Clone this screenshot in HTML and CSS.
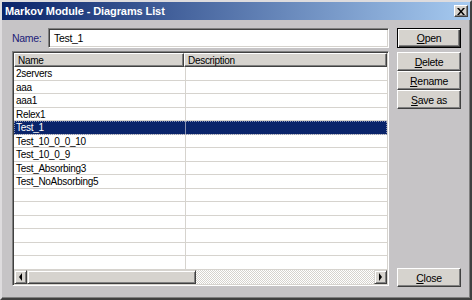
FILE: index.html
```html
<!DOCTYPE html>
<html lang="en">
<head>
  <meta charset="UTF-8">
  <title>Markov Module - Diagrams List</title>
  <link rel="stylesheet" href="styles.css">
</head>
<body>
  <div class="window">
    <div class="titlebar">
      <span class="title">Markov Module - Diagrams List</span>
      <span class="close-x">
        <svg width="8" height="7" viewBox="0 0 8 7"><path d="M0 0h2l2 2.5L6 0h2L5 3.5 8 7H6L4 4.5 2 7H0l3-3.5z" fill="#000"/></svg>
      </span>
    </div>

    <div class="client">
      <div class="left">
        <div class="name-row">
          <label class="name-label">Name:</label>
          <div class="textbox">Test_1</div>
        </div>

        <div class="listbox">
          <div class="header">
            <div class="hcell col-name">Name</div>
            <div class="hcell col-desc">Description</div>
          </div>
          <div class="rows" id="rows"></div>
          <div class="hscroll">
            <div class="sbtn"><span class="arrow-left"></span></div>
            <div class="thumb"></div>
            <div class="track"></div>
            <div class="sbtn"><span class="arrow-right"></span></div>
          </div>
        </div>
      </div>

      <div class="right">
        <button class="btn default"><u>O</u>pen</button>
        <div class="btn-stack">
          <button class="btn"><u>D</u>elete</button>
          <button class="btn"><u>R</u>ename</button>
          <button class="btn"><u>S</u>ave as</button>
        </div>
        <button class="btn close"><u>C</u>lose</button>
      </div>
    </div>
  </div>

  <script>
    const names = ["2servers", "aaa", "aaa1", "Relex1", "Test_1", "Test_10_0_0_10",
                   "Test_10_0_9", "Test_Absorbing3", "Test_NoAbsorbing5"];
    const rows = document.getElementById("rows");

    // 15 rows fill the list, the rest stay empty
    for (let i = 0; i < 15; i++) {
      const row = document.createElement("div");
      row.className = "row";
      if (names[i] === "Test_1") row.classList.add("selected");
      row.innerHTML = '<div class="cell col-name">' + (names[i] || "") + '</div><div class="cell col-desc"></div>';
      rows.appendChild(row);
    }
  </script>
</body>
</html>
```

FILE: styles.css
```css
body {
  margin: 0;
  font-family: "Liberation Sans", Arial, sans-serif;
  font-size: 10px;
  letter-spacing: -0.3px;
  color: #000;
}

.window {
  width: 472px;
  height: 300px;
  box-sizing: border-box;
  background: #c6c4c6;
  border: 2px solid;
  border-color: #dedcde #404040 #404040 #dedcde;
  box-shadow: inset -1px -1px #808080;
}

.titlebar {
  height: 18px;
  display: flex;
  align-items: center;
  justify-content: space-between;
  padding: 0 2px 0 3px;
  background: linear-gradient(to right, #0a246a, #a6caf0);
}

.title {
  color: #fff;
  font-weight: bold;
  font-size: 11px;
  letter-spacing: -0.1px;
}

.close-x {
  width: 14px;
  height: 12px;
  box-sizing: border-box;
  display: flex;
  align-items: center;
  justify-content: center;
  background: #d6d3ce;
  border: 1px solid;
  border-color: #fff #404040 #404040 #fff;
  box-shadow: inset -1px -1px #808080;
}

.client {
  display: flex;
  height: 278px;
  box-sizing: border-box;
  padding: 8px 0 0 10px;
}

.left {
  width: 377px;
  display: flex;
  flex-direction: column;
  gap: 3px;
  padding-bottom: 12px;
}

.name-row {
  display: flex;
  align-items: center;
  height: 20px;
}

.name-label {
  width: 36px;
  color: #1c1c78;
  font-size: 10.5px;
}

.textbox {
  flex: 1;
  height: 20px;
  box-sizing: border-box;
  background: #fff;
  border: 1px solid;
  border-color: #808080 #fff #fff #808080;
  box-shadow: inset 1px 1px #404040, inset -1px -1px #d6d3ce;
  padding: 3px 0 0 5px;
  font-size: 10.5px;
}

.listbox {
  flex: 1;
  display: flex;
  flex-direction: column;
  background: #fff;
  border: 1px solid;
  border-color: #808080 #fff #fff #808080;
  box-shadow: inset 1px 1px #404040, inset -1px -1px #d6d3ce;
  padding: 1px;
  overflow: hidden;
}

.header {
  display: flex;
  height: 14px;
}

.hcell {
  box-sizing: border-box;
  height: 14px;
  background: #d6d3ce;
  border: 1px solid;
  border-color: #fff #404040 #404040 #fff;
  box-shadow: inset -1px -1px #808080;
  padding: 1px 0 0 3px;
  line-height: 11px;
}

.header .col-name {
  width: 170px;
}

.header .col-desc {
  flex: 1;
}

.rows {
  flex: 1;
  overflow: hidden;
}

.row {
  display: flex;
  height: 13.5px;
  box-sizing: border-box;
  border-bottom: 1px solid #d6d3ce;
}

.cell {
  line-height: 13px;
  padding-left: 2px;
}

.row .col-name {
  width: 169px;
  border-right: 1px solid #d6d3ce;
}

.row .col-desc {
  flex: 1;
}

.row.selected {
  background: #0a246a;
  color: #fff;
  outline: 1px dotted #8c94b4;
  outline-offset: -1px;
}

.row.selected .col-name {
  border-right-color: #8c94b4;
}

.hscroll {
  display: flex;
  height: 14px;
}

.sbtn,
.thumb {
  box-sizing: border-box;
  height: 14px;
  background: #d6d3ce;
  border: 1px solid;
  border-color: #d6d3ce #404040 #404040 #d6d3ce;
  box-shadow: inset 1px 1px #fff, inset -1px -1px #808080;
}

.sbtn {
  width: 13px;
  display: flex;
  align-items: center;
  justify-content: center;
}

.thumb {
  width: 169px;
}

.track {
  flex: 1;
  background: repeating-conic-gradient(#fff 0 25%, #d6d3ce 0 50%) 0 0 / 2px 2px;
}

.arrow-left,
.arrow-right {
  width: 0;
  height: 0;
  border-top: 4px solid transparent;
  border-bottom: 4px solid transparent;
}

.arrow-left {
  border-right: 3px solid #000;
}

.arrow-right {
  border-left: 3px solid #000;
}

.right {
  width: 64px;
  margin-left: 8px;
  display: flex;
  flex-direction: column;
  padding-bottom: 11px;
}

.btn {
  height: 19px;
  box-sizing: border-box;
  font-family: "Liberation Sans", Arial, sans-serif;
  font-size: 10.5px;
  letter-spacing: -0.3px;
  color: #000;
  background: #d6d3ce;
  border: 1px solid;
  border-color: #fff #404040 #404040 #fff;
  box-shadow: inset -1px -1px #808080;
  padding: 0;
  margin: 0;
}

.btn.default {
  height: 20px;
  border: 1px solid #000;
  box-shadow: inset 1px 1px #fff, inset -1px -1px #404040, inset -2px -2px #808080;
}

.btn-stack {
  display: flex;
  flex-direction: column;
  margin-top: 4px;
}

.btn.close {
  margin-top: auto;
}
```
